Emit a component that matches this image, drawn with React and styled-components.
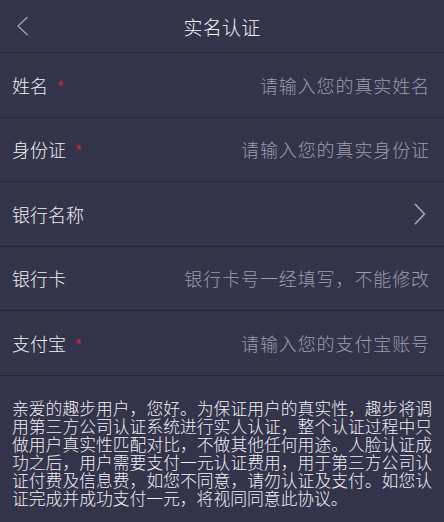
import React from 'react';
import styled, { createGlobalStyle } from 'styled-components';

const GlobalStyle = createGlobalStyle`
  html, body {
    margin: 0;
    padding: 0;
    background: #33334a;
  }
  body {
    font-family: "Noto Sans CJK SC", "Noto Sans", sans-serif;
  }
`;

const fields = [
  { id: 1, label: '姓名', required: true, placeholder: '请输入您的真实姓名' },
  { id: 2, label: '身份证', required: true, placeholder: '请输入您的真实身份证' },
  { id: 3, label: '银行名称', arrow: true },
  { id: 4, label: '银行卡', placeholder: '银行卡号一经填写，不能修改' },
  { id: 5, label: '支付宝', required: true, placeholder: '请输入您的支付宝账号' },
];

const ChevronLeft = () => (
  <svg width="14" height="20" viewBox="0 0 14 20" fill="none">
    <path d="M12 1.5L3 10l9 8.5" stroke="#9c9cae" strokeWidth="1.6" strokeLinecap="round" strokeLinejoin="round" />
  </svg>
);

const ChevronRight = () => (
  <svg width="12" height="22" viewBox="0 0 12 22" fill="none">
    <path d="M1.5 1.5L10.5 11l-9 9.5" stroke="#a2a2b2" strokeWidth="1.8" strokeLinecap="round" strokeLinejoin="round" />
  </svg>
);

const RealName = () => {
  return (
    <Page>
      <GlobalStyle />
      <Header>
        <BackButton>
          <ChevronLeft />
        </BackButton>
        <Title>实名认证</Title>
      </Header>
      <FormList>
        {fields.map((field) => (
          <Row key={field.id}>
            <Label>
              {field.label}
              {field.required && <Star>*</Star>}
            </Label>
            {field.placeholder && <Input placeholder={field.placeholder} type="text" />}
            {field.arrow && (
              <ArrowWrap>
                <ChevronRight />
              </ArrowWrap>
            )}
          </Row>
        ))}
      </FormList>
      <Notice>
        亲爱的趣步用户，您好。为保证用户的真实性，趣步将调用第三方公司认证系统进行实人认证，整个认证过程中只做用户真实性匹配对比，不做其他任何用途。人脸认证成功之后，用户需要支付一元认证费用，用于第三方公司认证付费及信息费，如您不同意，请勿认证及支付。如您认证完成并成功支付一元，将视同同意此协议。
      </Notice>
    </Page>
  );
};

const Page = styled.div`
  width: 444px;
  min-height: 522px;
  background: #33334a;
  color: #f0f0f5;
`;

const Header = styled.div`
  position: relative;
  height: 52px;
  display: flex;
  align-items: center;
  justify-content: center;
  border-bottom: 1.5px solid #26263a;
`;

const BackButton = styled.div`
  position: absolute;
  left: 15px;
  top: 16px;
  display: flex;
`;

const Title = styled.div`
  font-size: 19px;
  font-weight: 300;
  color: #f2f2f6;
  letter-spacing: 0.3px;
`;

const FormList = styled.div`
  display: flex;
  flex-direction: column;
`;

const Row = styled.div`
  height: 63.5px;
  display: flex;
  align-items: center;
  justify-content: space-between;
  padding: 0 14px 0 12px;
  border-bottom: 1.5px solid #26263a;
`;

const Label = styled.div`
  display: flex;
  align-items: center;
  flex-shrink: 0;
  font-size: 18px;
  font-weight: 300;
  color: #f0f0f5;
`;

const Star = styled.span`
  margin-left: 8px;
  font-size: 20px;
  color: #d2213c;
  line-height: 1;
  position: relative;
  top: 3px;
`;

const Input = styled.input`
  flex: 1;
  min-width: 0;
  margin-left: 16px;
  background: transparent;
  border: none;
  outline: none;
  text-align: right;
  font-family: "Noto Sans CJK SC", "Noto Sans", sans-serif;
  font-size: 18px;
  font-weight: 300;
  letter-spacing: 0.9px;
  color: #f0f0f5;
  padding: 0;
  &::placeholder {
    color: #9d9dab;
  }
`;

const ArrowWrap = styled.div`
  display: flex;
  padding-right: 4px;
`;

const Notice = styled.p`
  margin: 0;
  padding: 23px 12px 16px 12px;
  width: 420px;
  font-size: 16.8px;
  font-weight: 300;
  line-height: 18px;
  color: #f0f0f5;
  text-align: justify;
`;

export default RealName;
